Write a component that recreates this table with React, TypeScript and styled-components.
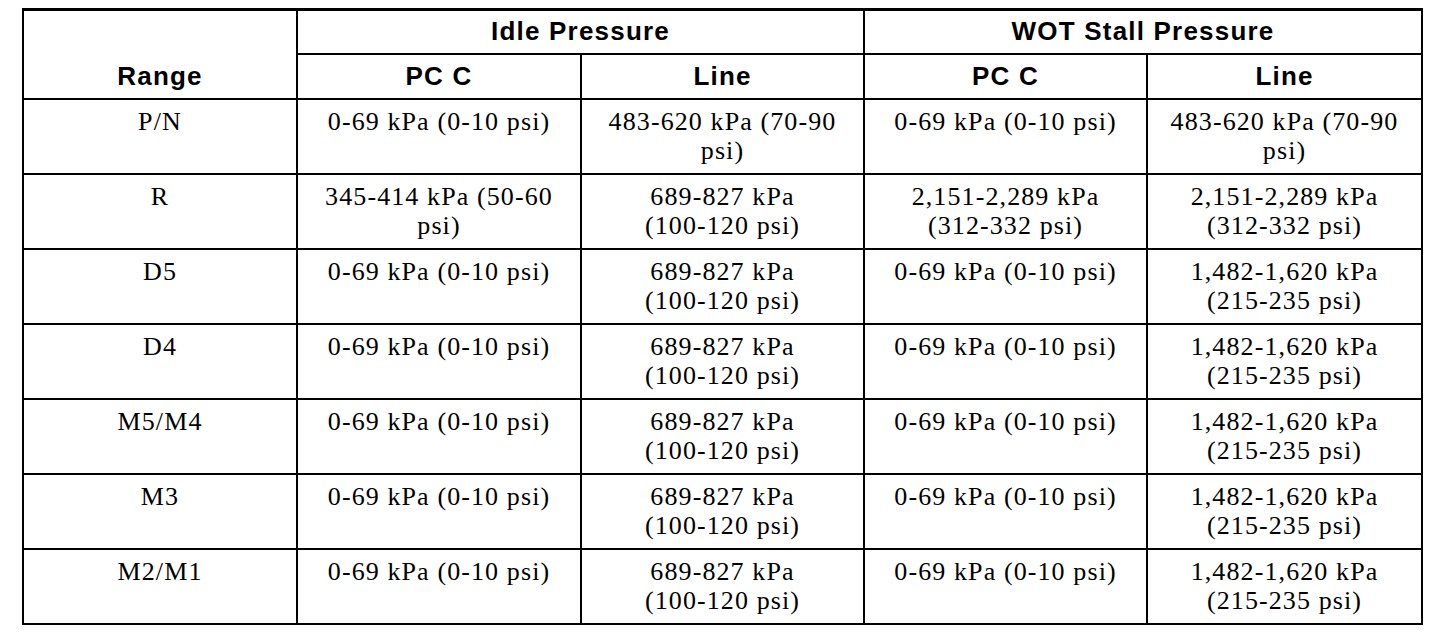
import React from "react";
import styled, { createGlobalStyle } from "styled-components";

const GlobalStyle = createGlobalStyle`
  html, body {
    margin: 0;
    padding: 0;
    background: #ffffff;
  }
`;

const Page = styled.div`
  padding: 8px 0 0 22px;
`;

const Sheet = styled.table`
  border-collapse: collapse;
  table-layout: fixed;
  width: 1399px;
  border-top: 3px solid #000;
  border-bottom: 2px solid #000;
  border-left: 2px solid #000;
  border-right: 2px solid #000;
  color: #000;
`;

const HeadRow = styled.tr<{ $h: number }>`
  height: ${(p) => p.$h}px;
`;

const HeadCell = styled.th<{ $bottom?: boolean }>`
  border: 2px solid #000;
  font-family: "Liberation Sans", Arial, sans-serif;
  font-weight: bold;
  font-size: 26px;
  letter-spacing: 1.2px;
  line-height: 29px;
  text-align: center;
  vertical-align: ${(p) => (p.$bottom ? "bottom" : "middle")};
  padding: ${(p) => (p.$bottom ? "0 8px 7px" : "2px 8px 2px")};
`;

const BodyRow = styled.tr`
  height: 75px;
`;

const BodyCell = styled.td`
  border: 2px solid #000;
  font-family: "Liberation Serif", "Times New Roman", serif;
  font-size: 26px;
  letter-spacing: 1.1px;
  line-height: 29px;
  text-align: center;
  vertical-align: top;
  padding: 7px 20px 0;
`;

/* a value only breaks at its spaces, never at a hyphen */
const Word = styled.span`
  white-space: nowrap;
`;

const widths = [274, 284, 283, 283, 275];

const rows: string[][] = [
  ["P/N", "0-69 kPa (0-10 psi)", "483-620 kPa (70-90 psi)", "0-69 kPa (0-10 psi)", "483-620 kPa (70-90 psi)"],
  ["R", "345-414 kPa (50-60 psi)", "689-827 kPa (100-120 psi)", "2,151-2,289 kPa (312-332 psi)", "2,151-2,289 kPa (312-332 psi)"],
  ["D5", "0-69 kPa (0-10 psi)", "689-827 kPa (100-120 psi)", "0-69 kPa (0-10 psi)", "1,482-1,620 kPa (215-235 psi)"],
  ["D4", "0-69 kPa (0-10 psi)", "689-827 kPa (100-120 psi)", "0-69 kPa (0-10 psi)", "1,482-1,620 kPa (215-235 psi)"],
  ["M5/M4", "0-69 kPa (0-10 psi)", "689-827 kPa (100-120 psi)", "0-69 kPa (0-10 psi)", "1,482-1,620 kPa (215-235 psi)"],
  ["M3", "0-69 kPa (0-10 psi)", "689-827 kPa (100-120 psi)", "0-69 kPa (0-10 psi)", "1,482-1,620 kPa (215-235 psi)"],
  ["M2/M1", "0-69 kPa (0-10 psi)", "689-827 kPa (100-120 psi)", "0-69 kPa (0-10 psi)", "1,482-1,620 kPa (215-235 psi)"],
];

function Value({ text }: { text: string }) {
  const words = text.split(" ");
  return (
    <>
      {words.map((w, i) => (
        <React.Fragment key={i}>
          <Word>{w}</Word>
          {i < words.length - 1 ? " " : null}
        </React.Fragment>
      ))}
    </>
  );
}

export default function App() {
  return (
    <Page>
      <GlobalStyle />
      <Sheet>
        <colgroup>
          {widths.map((w, i) => (
            <col key={i} style={{ width: w }} />
          ))}
        </colgroup>
        <thead>
          <HeadRow $h={44}>
            <HeadCell rowSpan={2} $bottom>
              Range
            </HeadCell>
            <HeadCell colSpan={2}>Idle Pressure</HeadCell>
            <HeadCell colSpan={2}>WOT Stall Pressure</HeadCell>
          </HeadRow>
          <HeadRow $h={45}>
            <HeadCell $bottom>PC C</HeadCell>
            <HeadCell $bottom>Line</HeadCell>
            <HeadCell $bottom>PC C</HeadCell>
            <HeadCell $bottom>Line</HeadCell>
          </HeadRow>
        </thead>
        <tbody>
          {rows.map((r) => (
            <BodyRow key={r[0]}>
              {r.map((c, i) => (
                <BodyCell key={i}>
                  <Value text={c} />
                </BodyCell>
              ))}
            </BodyRow>
          ))}
        </tbody>
      </Sheet>
    </Page>
  );
}
